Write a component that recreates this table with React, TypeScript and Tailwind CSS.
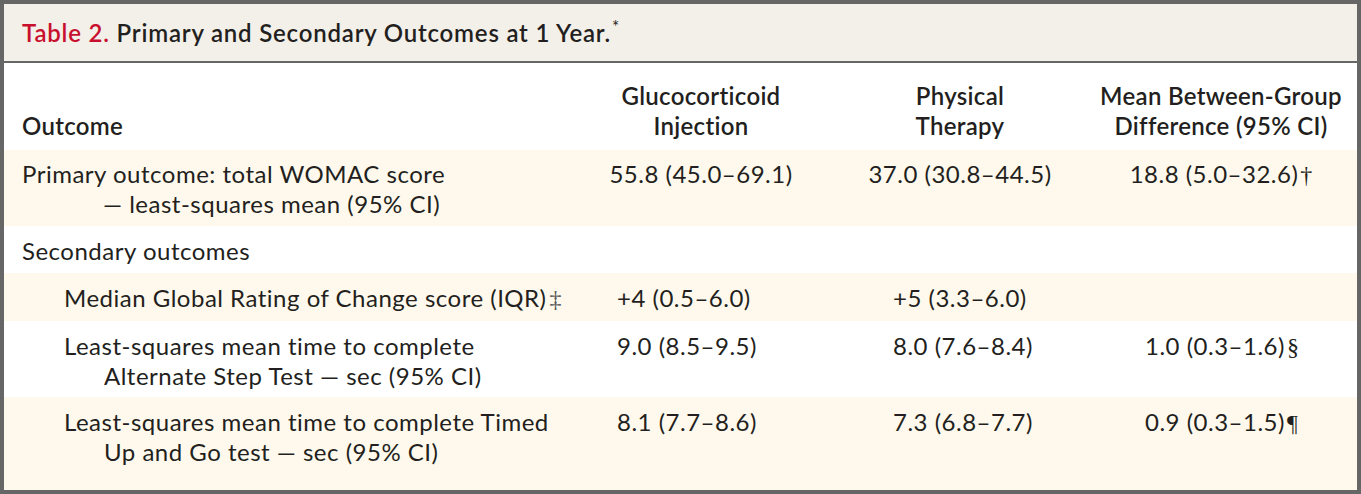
const sans = "font-['Lato',sans-serif]";
const serif = "font-['Liberation_Serif',serif]";

interface Row {
  label: string;
  labelMark?: string;
  cont?: string;
  indent: boolean;
  values?: [string, string, string];
  marks?: [string, string, string];
  cream: boolean;
  pad: string;
  centered: boolean;
}

const rows: Row[] = [
  {
    label: "Primary outcome: total WOMAC score",
    cont: "— least-squares mean (95% CI)",
    indent: false,
    values: ["55.8 (45.0–69.1)", "37.0 (30.8–44.5)", "18.8 (5.0–32.6)"],
    marks: ["", "", "†"],
    cream: true,
    pad: "pt-[9px] pb-[7px]",
    centered: true,
  },
  {
    label: "Secondary outcomes",
    indent: false,
    cream: false,
    pad: "pt-[10px] pb-[7px]",
    centered: false,
  },
  {
    label: "Median Global Rating of Change score (IQR)",
    labelMark: "‡",
    indent: true,
    values: ["+4 (0.5–6.0)", "+5 (3.3–6.0)", ""],
    cream: true,
    pad: "pt-[10px] pb-[7px]",
    centered: false,
  },
  {
    label: "Least-squares mean time to complete",
    cont: "Alternate Step Test — sec (95% CI)",
    indent: true,
    values: ["9.0 (8.5–9.5)", "8.0 (7.6–8.4)", "1.0 (0.3–1.6)"],
    marks: ["", "", "§"],
    cream: false,
    pad: "pt-[10px] pb-[6px]",
    centered: false,
  },
  {
    label: "Least-squares mean time to complete Timed",
    cont: "Up and Go test — sec (95% CI)",
    indent: true,
    values: ["8.1 (7.7–8.6)", "7.3 (6.8–7.7)", "0.9 (0.3–1.5)"],
    marks: ["", "", "¶"],
    cream: true,
    pad: "pt-[10px] pb-[22px]",
    centered: false,
  },
];

const cols = "grid grid-cols-[586px_222px_296px_226px] pr-[23px]";
const body = `${sans} text-[24px] leading-[30px] tracking-[0.5px]`;

function ValueCell({ row, i }: { row: Row; i: number }) {
  const v = row.values?.[i] ?? "";
  const mark = row.marks?.[i] ?? "";
  const pads = ["pl-[27px]", "pl-[81px]", "pl-[37px]"];
  return (
    <div className={`${body} ${row.centered ? "text-center" : pads[i]}`}>
      {v}
      {mark && <span className={`${serif} ml-[2px] text-[24px] tracking-normal`}>{mark}</span>}
    </div>
  );
}

function HeadCell({ lines }: { lines: string[] }) {
  return (
    <div className="flex flex-col items-center">
      {lines.map((l) => (
        <span key={l} className="whitespace-nowrap">
          {l}
        </span>
      ))}
    </div>
  );
}

export default function App() {
  return (
    <div className="h-[494px] w-[1361px] bg-[#666666] p-[4px] text-[#231f20]">
      <div className="flex h-full flex-col bg-white">
        <div className="flex h-[59px] items-center border-b-[2px] border-[#666666] bg-[#f3efe9] pl-[18px]">
          <h1 className={`${sans} text-[24px] font-semibold tracking-[0.8px]`}>
            <span className="text-[#c8102e]">Table 2.</span> Primary and Secondary Outcomes at 1 Year.
            <sup className="ml-[1px] text-[17px] font-normal">*</sup>
          </h1>
        </div>

        <div className={`${cols} ${sans} h-[87px] items-end pb-[9px] text-[24px] font-semibold leading-[30px] tracking-[0.3px]`}>
          <div className="pl-[18px]">Outcome</div>
          <HeadCell lines={["Glucocorticoid", "Injection"]} />
          <HeadCell lines={["Physical", "Therapy"]} />
          <HeadCell lines={["Mean Between-Group", "Difference (95% CI)"]} />
        </div>

        {rows.map((row) => (
          <div
            key={row.label}
            className={`${cols} ${row.pad} ${row.cream ? "bg-[#fef9ec]" : "bg-white"}`}
          >
            <div className={`${body} ${row.indent ? "pl-[60px]" : "pl-[18px]"}`}>
              <div>
                {row.label}
                {row.labelMark && (
                  <span className={`${serif} ml-[3px] font-light tracking-normal text-[#555]`}>{row.labelMark}</span>
                )}
              </div>
              {row.cont && <div className={row.indent ? "pl-[40px]" : "pl-[81px]"}>{row.cont}</div>}
            </div>
            {[0, 1, 2].map((i) => (
              <ValueCell key={i} row={row} i={i} />
            ))}
          </div>
        ))}
        <div className="flex-1 bg-[#fef9ec]" />
      </div>
    </div>
  );
}
